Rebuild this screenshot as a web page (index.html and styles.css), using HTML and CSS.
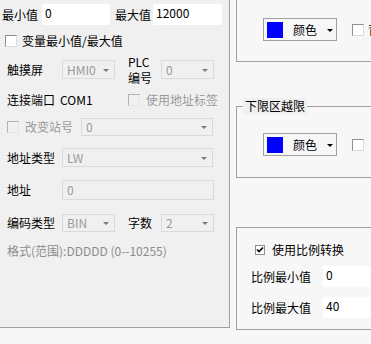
FILE: index.html
```html
<!DOCTYPE html>
<html lang="zh-CN">
<head>
  <meta charset="UTF-8" />
  <title>地址设置</title>
  <link rel="stylesheet" href="styles.css">
</head>
<body>
  <main class="window">
    <section class="panel">
      <div class="row r-range">
        <span class="lbl">最小值</span>
        <span class="field f-min">0</span>
        <span class="lbl lbl-max">最大值</span>
        <span class="field f-max">12000</span>
      </div>

      <div class="row r-var">
        <span class="check"></span>
        <span class="check-text">变量最小值/最大值</span>
      </div>

      <div class="row r-hmi">
        <span class="lbl lbl-col">触摸屏</span>
        <span class="combo combo-sm">HMI0<i class="arrow"></i></span>
        <span class="lbl lbl-plc">PLC<br>编号</span>
        <span class="combo combo-sm">0<i class="arrow"></i></span>
      </div>

      <div class="row r-port">
        <span class="lbl lbl-port">连接端口</span>
        <span class="port">COM1</span>
        <span class="check off"></span>
        <span class="check-text muted">使用地址标签</span>
      </div>

      <div class="row r-station">
        <span class="check off"></span>
        <span class="check-text muted station-text">改变站号</span>
        <span class="combo combo-station">0<i class="arrow"></i></span>
      </div>

      <div class="row r-type">
        <span class="lbl lbl-col">地址类型</span>
        <span class="combo combo-wide">LW<i class="arrow"></i></span>
      </div>

      <div class="row r-addr">
        <span class="lbl lbl-col">地址</span>
        <span class="combo combo-addr">0</span>
      </div>

      <div class="row r-code">
        <span class="lbl lbl-col">编码类型</span>
        <span class="combo combo-sm">BIN<i class="arrow"></i></span>
        <span class="lbl lbl-plc">字数</span>
        <span class="combo combo-sm">2<i class="arrow"></i></span>
      </div>

      <div class="row r-format">格式(范围):DDDDD (0--10255)</div>
    </section>

    <aside class="side">
      <div class="box box-top">
        <div class="color-row">
          <span class="picker"><i class="swatch"></i><span class="picker-text">颜色</span><i class="arrow dark"></i></span>
          <span class="check"></span>
          <span class="check-text">背景</span>
        </div>
      </div>

      <fieldset class="box box-low">
        <legend>下限区越限</legend>
        <div class="color-row">
          <span class="picker"><i class="swatch"></i><span class="picker-text">颜色</span><i class="arrow dark"></i></span>
          <span class="check"></span>
        </div>
      </fieldset>

      <div class="box box-scale">
        <div class="scale-check">
          <span class="check small on">
            <svg width="8" height="8" viewBox="0 0 8 8"><path d="M1 3.5 L3 5.5 L7 1.5" fill="none" stroke="#000" stroke-width="1.6"/></svg>
          </span>
          <span class="check-text">使用比例转换</span>
        </div>
        <div class="scale-row">
          <span class="scale-lbl">比例最小值</span>
          <span class="field scale-field">0</span>
        </div>
        <div class="scale-row">
          <span class="scale-lbl">比例最大值</span>
          <span class="field scale-field">40</span>
        </div>
      </div>
    </aside>
  </main>
</body>
</html>
```

FILE: styles.css
```css
:root {
  --panel: #f0f0f0;
  --bg: #f7f7f7;
  --line: #a0a0a0;
  --ink: #000;
  --muted: #9a9a9a;
  --soft-line: #dadada;
}

* { box-sizing: border-box; }

body {
  margin: 0;
  background: var(--bg);
  color: var(--ink);
  font-family: "Noto Sans CJK SC", "Noto Sans", sans-serif;
  font-size: 12px;
  line-height: 16px;
}

.window {
  display: flex;
  width: 371px;
  height: 344px;
  overflow: hidden;
}

/* left panel */
.panel {
  flex: none;
  width: 230px;
  height: 328px;
  padding-top: 4px;
  background: var(--panel);
  border-right: 1px solid var(--line);
  border-bottom: 1px solid var(--line);
}

.row {
  display: flex;
  align-items: center;
  padding-left: 7px;
}

.lbl { white-space: nowrap; }
.lbl-col { width: 55px; }

.field {
  display: block;
  height: 21px;
  padding: 1px 0 0 3px;
  background: #fff;
}

.r-range { height: 21px; padding-left: 2px; }
.r-range .f-min { width: 68px; margin-left: 4px; }
.r-range .lbl-max { margin-left: 5px; }
.r-range .f-max { width: 69px; margin-left: 2px; }

.check {
  flex: none;
  width: 12px;
  height: 12px;
  background: #fff;
  border: 1px solid #8f8f8f;
  border-right-color: #dcdcdc;
  border-bottom-color: #dcdcdc;
}

.check.off {
  background: var(--panel);
  border-color: #b4b4b4;
  border-right-color: #e6e6e6;
  border-bottom-color: #e6e6e6;
}

.check-text { margin-left: 5px; white-space: nowrap; }
.muted { color: var(--muted); }

.r-var { height: 16px; margin-top: 8px; padding-left: 5px; }

.combo {
  position: relative;
  display: flex;
  align-items: center;
  height: 19px;
  padding-left: 4px;
  color: var(--muted);
  background: var(--panel);
  border: 1px solid var(--soft-line);
}

.arrow {
  position: absolute;
  right: 5px;
  top: 50%;
  margin-top: -1px;
  border-left: 3px solid transparent;
  border-right: 3px solid transparent;
  border-top: 3px solid #7a7a7a;
}

.arrow.dark { border-top-color: #000; }

.combo-sm { width: 53px; }
.lbl-plc { width: 33px; margin-left: 13px; line-height: 16px; }

.r-hmi { height: 29px; margin-top: 6px; }

.r-port { height: 16px; margin-top: 8px; }
.lbl-port { width: 53px; }
.port { width: 68px; }
.r-port .check-text { margin-left: 6px; }

.r-station { height: 18px; margin-top: 10px; }
.station-text { width: 56px; margin-left: 6px; }
.combo-station { width: 132px; height: 18px; }

.r-type { height: 19px; margin-top: 12px; }
.combo-wide { width: 151px; }

.r-addr { height: 20px; margin-top: 13px; }
.combo-addr { width: 152px; height: 20px; align-items: flex-start; padding-top: 1px; }

.r-code { height: 18px; margin-top: 14px; }
.r-code .combo { height: 18px; }

.r-format {
  height: 16px;
  margin-top: 11px;
  color: #8c8c8c;
}

/* right column */
.side {
  flex: none;
  width: 200px;
  padding-left: 6px;
}

.box {
  width: 180px;
  border: 1px solid var(--line);
  border-right: none;
}

.box-top {
  height: 62px;
  border-top: none;
  padding: 18px 0 0 26px;
}

.color-row {
  display: flex;
  align-items: center;
}

.picker {
  position: relative;
  display: flex;
  align-items: center;
  width: 74px;
  height: 23px;
  padding-left: 3px;
  border: 1px solid var(--line);
}

.swatch {
  width: 16px;
  height: 16px;
  background: #0000ff;
}

.picker-text { margin-left: 10px; }
.picker .arrow { right: 3px; }

.color-row .check { margin-left: 15px; }
.color-row .check-text { margin-left: 4px; }

.box-low {
  margin: 36px 0 0;
  padding: 0;
  min-width: 0;
  height: 80px;
}

.box-low legend {
  margin-left: 6px;
  padding: 0 2px;
  line-height: 16px;
  background: var(--panel);
}

.box-low .color-row {
  margin: 19px 0 0 26px;
}

.box-scale {
  height: 103px;
  margin-top: 49px;
  padding: 16px 0 0 14px;
}

.scale-check {
  display: flex;
  align-items: center;
  height: 12px;
  padding-left: 4px;
}

.check.small {
  width: 10px;
  height: 10px;
  display: grid;
  place-items: center;
  border-color: #8f8f8f;
}

.scale-check .check-text { margin-left: 7px; }

.scale-row {
  display: flex;
  align-items: center;
  height: 21px;
  margin-top: 10px;
}

.scale-lbl { width: 72px; }
.scale-field { width: 80px; }
```
